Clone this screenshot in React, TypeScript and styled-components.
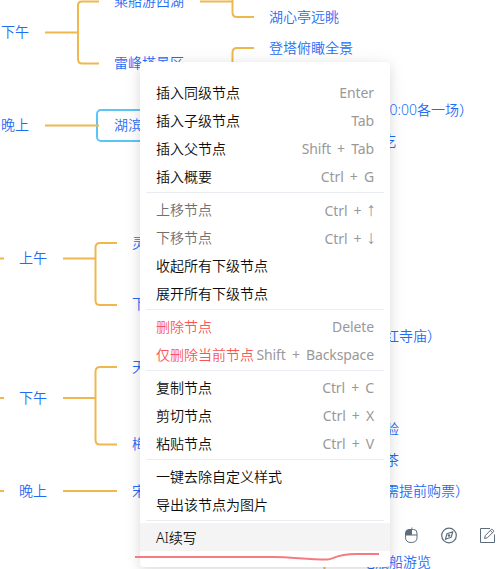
import React from "react";
import styled, { createGlobalStyle } from "styled-components";

const Global = createGlobalStyle`
  * { box-sizing: border-box; }
  html, body { margin: 0; padding: 0; overflow: hidden; background: #fff; }
`;

const Canvas = styled.main`
  position: relative;
  width: 500px;
  height: 569px;
  overflow: hidden;
  background: #fff;
  font-family: "Noto Sans", "Noto Sans CJK SC", sans-serif;
  font-size: 14px;
  font-weight: 350;
`;

const Links = styled.svg`
  position: absolute;
  inset: 0;
`;

const Topic = styled.span<{ $x: number; $y: number; $end?: boolean }>`
  position: absolute;
  top: ${(p) => p.$y - 10}px;
  ${(p) => (p.$end ? `right: ${500 - p.$x}px;` : `left: ${p.$x}px;`)}
  line-height: 20px;
  white-space: nowrap;
  color: #1f6cf5;
`;

const Selection = styled.div`
  position: absolute;
  left: 96px;
  top: 109px;
  width: 190px;
  height: 33px;
  border: 2px solid #5cc5f8;
  border-radius: 5px;
`;

const Menu = styled.nav`
  position: absolute;
  left: 140px;
  top: 62px;
  width: 250px;
  padding: 16px 0;
  border-radius: 4px;
  background: #fff;
  box-shadow: 0 4px 12px rgba(0, 0, 0, 0.1), 0 0 20px rgba(0, 0, 0, 0.06);
`;

const Item = styled.div<{ $tone?: "muted" | "danger"; $active?: boolean }>`
  display: flex;
  align-items: center;
  justify-content: space-between;
  height: 28px;
  padding: 2px 16px 0;
  line-height: 20px;
  white-space: nowrap;
  color: ${(p) => (p.$tone === "muted" ? "#707070" : p.$tone === "danger" ? "#f85656" : "#0c0c0c")};
  background: ${(p) => (p.$active ? "#f4f4f4" : "transparent")};
`;

const Shortcut = styled.span`
  font-weight: 400;
  letter-spacing: -0.1px;
  word-spacing: 2.6px;
  color: #999;
`;

const Arrow = styled.span`
  margin: 0 -2px 0 -1px;
  font-family: "Liberation Sans", sans-serif;
  font-size: 19px;
  line-height: 1;
`;

const Divider = styled.hr`
  height: 1px;
  margin: 2px 6px;
  border: 0;
  background: #e9edf2;
`;

const Toolbar = styled.div`
  position: absolute;
  left: 403px;
  top: 527px;
  display: flex;
  gap: 22px;
  color: #5d6c7b;
`;

const Underline = styled.svg`
  position: absolute;
  left: 130px;
  top: 545px;
`;

type Entry = { label: string; keys?: string; arrow?: string; tone?: "muted" | "danger"; active?: boolean };

const groups: Entry[][] = [
  [
    { label: "插入同级节点", keys: "Enter" },
    { label: "插入子级节点", keys: "Tab" },
    { label: "插入父节点", keys: "Shift + Tab" },
    { label: "插入概要", keys: "Ctrl + G" },
  ],
  [
    { label: "上移节点", keys: "Ctrl + ", arrow: "↑", tone: "muted" },
    { label: "下移节点", keys: "Ctrl + ", arrow: "↓", tone: "muted" },
    { label: "收起所有下级节点" },
    { label: "展开所有下级节点" },
  ],
  [
    { label: "删除节点", keys: "Delete", tone: "danger" },
    { label: "仅删除当前节点", keys: "Shift + Backspace", tone: "danger" },
  ],
  [
    { label: "复制节点", keys: "Ctrl + C" },
    { label: "剪切节点", keys: "Ctrl + X" },
    { label: "粘贴节点", keys: "Ctrl + V" },
  ],
  [{ label: "一键去除自定义样式" }, { label: "导出该节点为图片" }],
  [{ label: "AI续写", active: true }],
];

const topics: { text: string; x: number; y: number; end?: boolean }[] = [
  { text: "乘船游西湖", x: 114, y: 1 },
  { text: "湖心亭远眺", x: 269, y: 17 },
  { text: "下午", x: 1, y: 32 },
  { text: "登塔俯瞰全景", x: 269, y: 48 },
  { text: "雷峰塔景区", x: 114, y: 63 },
  { text: "晚上", x: 1, y: 125 },
  { text: "湖滨", x: 114, y: 125 },
  { text: "0:00各一场）", x: 473, y: 110, end: true },
  { text: "吃", x: 396, y: 141, end: true },
  { text: "上午", x: 19, y: 258 },
  { text: "灵", x: 132, y: 243 },
  { text: "下", x: 132, y: 304 },
  { text: "红寺庙）", x: 441, y: 336, end: true },
  { text: "下午", x: 19, y: 398 },
  { text: "天", x: 132, y: 367 },
  { text: "梅", x: 132, y: 444 },
  { text: "晚上", x: 19, y: 491 },
  { text: "宋", x: 132, y: 491 },
  { text: "验", x: 399, y: 429, end: true },
  { text: "茶", x: 399, y: 460, end: true },
  { text: "需提前购票）", x: 469, y: 491, end: true },
  { text: "电瓶船游览", x: 431, y: 562, end: true },
];

export default function App() {
  return (
    <>
      <Global />
      <Canvas>
        <Selection />
        <Links width="500" height="569" fill="none" stroke="#efb74e" strokeWidth="2">
          <path d="M45 32.5H78M99 1.5H82Q78 1.5 78 5.5V59Q78 63.500 82 63.500H99" />
          <path d="M200 1.500H232.500M254 17H237Q232.500 17 232.500 12.500V0M254 48H237Q232.500 48 232.500 52.500V80" />
          <path d="M45 125.500H99M0 258.500H4M63 258.500H96M117 243H100Q95.500 243 95.500 247.500V300.500Q95.500 305 100 305H117" />
          <path d="M0 398H4M63 398H96M117 367H100Q95.500 367 95.500 371.500V440Q95.500 444.500 100 444.500H117" />
          <path d="M0 491H4M63 491H117M324.500 560V569" />
        </Links>
        {topics.map((t) => (
          <Topic key={t.text + t.y} $x={t.x} $y={t.y} $end={t.end}>{t.text}</Topic>
        ))}
        <Toolbar>
          <svg width="16" height="17" viewBox="0 0 16 17" fill="none" stroke="currentColor">
            <path d="M8 3C8 1.500 9.500 2 9 0.500M2.500 8V6Q2.500 2.500 6 2.500H10.500Q14 2.500 14 6V10.500Q14 15.500 8.250 15.500T2.500 10.500V8H14M8.500 3V8" />
            <path d="M3 8V6Q3 3 6 3H8V7.500H3Z" fill="currentColor" />
          </svg>
          <svg width="16" height="17" viewBox="0 0 16 17" fill="none" stroke="currentColor" strokeWidth="1.200">
            <circle cx="8" cy="8.500" r="7.300" />
            <path d="M11.800 4.700L10.200 10.200L4.400 12.300L6 6.700Z" strokeLinejoin="round" />
            <circle cx="8" cy="8.500" r="0.700" />
          </svg>
          <svg width="18" height="17" viewBox="0 0 18 17" fill="none" stroke="currentColor">
            <path d="M11 1.500H1.500V15.500H15.500V7.500" />
            <path d="M5.500 11.500L6.300 8.500L12.800 2L15 4.200L8.500 10.700ZM11.300 3.500L13.500 5.700" />
          </svg>
        </Toolbar>
        <Menu>
          {groups.map((group, i) => (
            <React.Fragment key={i}>
              {i > 0 && <Divider />}
              {group.map((e) => (
                <Item key={e.label} $tone={e.tone} $active={e.active}>
                  <span>{e.label}</span>
                  {e.keys && (
                    <Shortcut>
                      {e.keys}
                      {e.arrow && <Arrow>{e.arrow}</Arrow>}
                    </Shortcut>
                  )}
                </Item>
              ))}
            </React.Fragment>
          ))}
        </Menu>
        <Underline width="260" height="24" fill="none" stroke="#f47c80" strokeWidth="2">
          <path d="M5 12H144C162 12 176 14.500 197 14.500C204 14.500 205 9 226 9H249" />
        </Underline>
      </Canvas>
    </>
  );
}
